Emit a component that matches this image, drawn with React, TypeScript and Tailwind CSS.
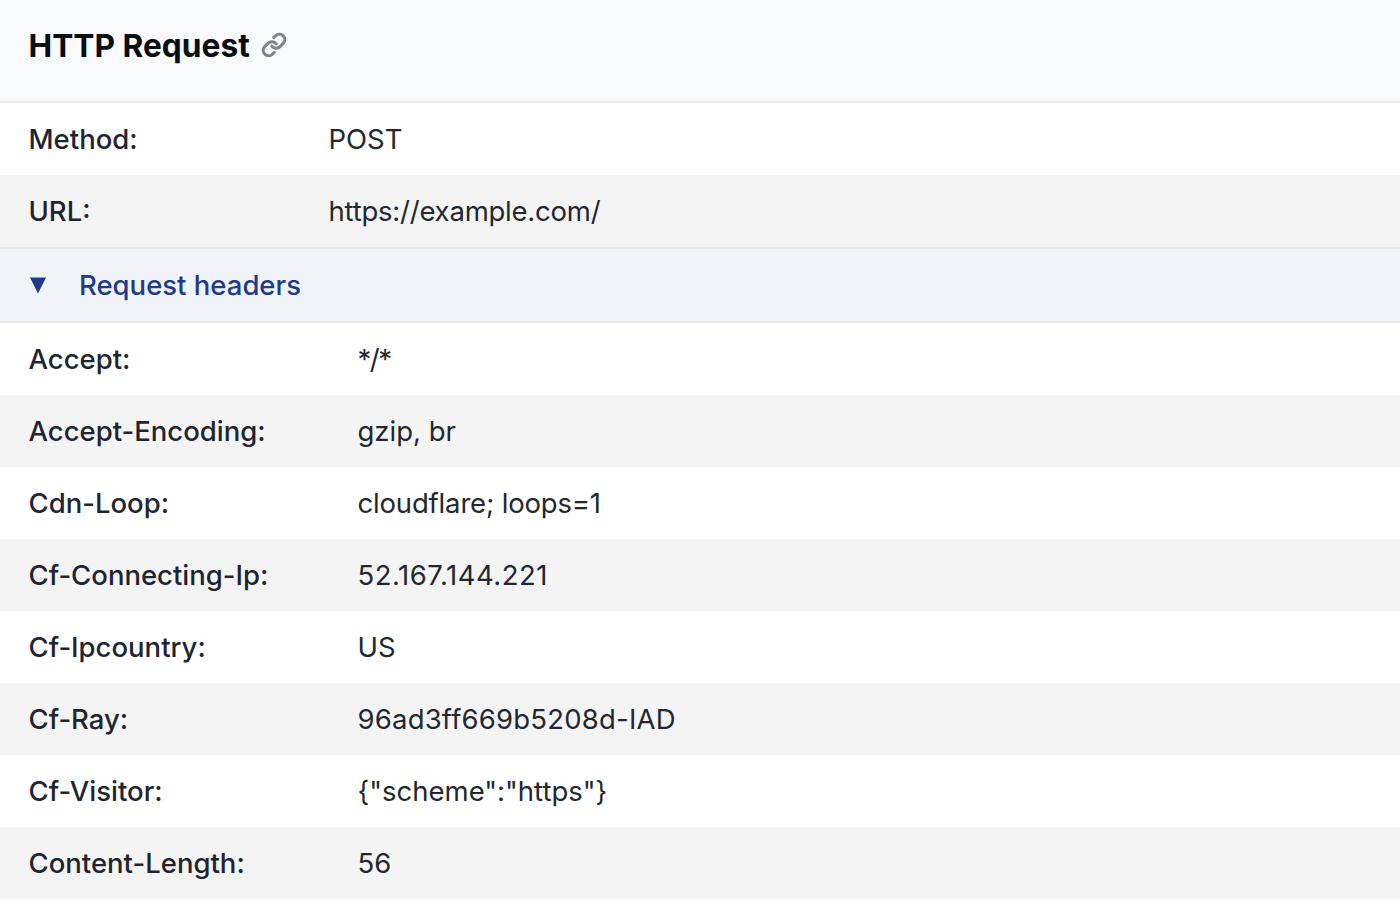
const top = [
  ["Method:", "POST", ""],
  ["URL:", "https://example.com/", "tracking-[-0.22px]"],
];
const headers = [
  ["Accept:", "*/*", "tracking-[-1.5px]"],
  ["Accept-Encoding:", "gzip, br", ""],
  ["Cdn-Loop:", "cloudflare; loops=1", "tracking-[-0.17px]"],
  ["Cf-Connecting-Ip:", "52.167.144.221", "tracking-[0.5px]"],
  ["Cf-Ipcountry:", "US", ""],
  ["Cf-Ray:", "96ad3ff669b5208d-IAD", "tracking-[0.2px]"],
  ["Cf-Visitor:", '{"scheme":"https"}', ""],
  ["Content-Length:", "56", ""],
];

function Row({ k, v, t, odd, w }: { k: string; v: string; t: string; odd: boolean; w: string }) {
  return (
    <div className={`flex h-[72px] items-center pl-[28.5px] ${odd ? "bg-[#f4f4f5]" : "bg-white"}`}>
      <div className={`${w} shrink-0 font-medium text-[#1f2530]`}>{k}</div>
      <div className={`text-[#23272f] ${t}`}>{v}</div>
    </div>
  );
}

export default function App() {
  return (
    <div className="h-[900px] overflow-hidden bg-white font-['Inter',sans-serif] text-[27.5px] leading-[40px]">
      <div className="flex h-[103px] items-start gap-[11px] border-b-2 border-[#e7e8ea] bg-[#f9fafb] pl-[28.5px] pt-[26px]">
        <h1 className="text-[31.7px] font-bold text-[#0b0d12]">HTTP Request</h1>
        <svg
          className="mt-[6px] h-[26px] w-[26px] text-[#7d838c]"
          viewBox="0 0 24 24"
          fill="none"
          stroke="currentColor"
          strokeWidth={2.8}
          strokeLinecap="round"
          strokeLinejoin="round"
        >
          <path d="M10 13a5 5 0 0 0 7.54.54l3-3a5 5 0 0 0-7.07-7.07l-1.72 1.71" />
          <path d="M14 11a5 5 0 0 0-7.54-.54l-3 3a5 5 0 0 0 7.07 7.07l1.71-1.71" />
        </svg>
      </div>
      {top.map(([k, v, t], i) => (
        <Row key={k} k={k} v={v} t={t} odd={i % 2 === 1} w="w-[300px]" />
      ))}
      <div className="flex h-[76px] items-center border-y-2 border-[#e7e8ea] bg-[#f0f4f9] pl-[29px] text-[#1f3a8a]">
        <svg className="mr-[32px] h-[18px] w-[18px]" viewBox="0 0 18 18" fill="currentColor">
          <path d="M1 1.5h16L9 17.5z" />
        </svg>
        <span className="font-medium">Request headers</span>
      </div>
      {headers.map(([k, v, t], i) => (
        <Row key={k} k={k} v={v} t={t} odd={i % 2 === 1} w="w-[329px]" />
      ))}
    </div>
  );
}
